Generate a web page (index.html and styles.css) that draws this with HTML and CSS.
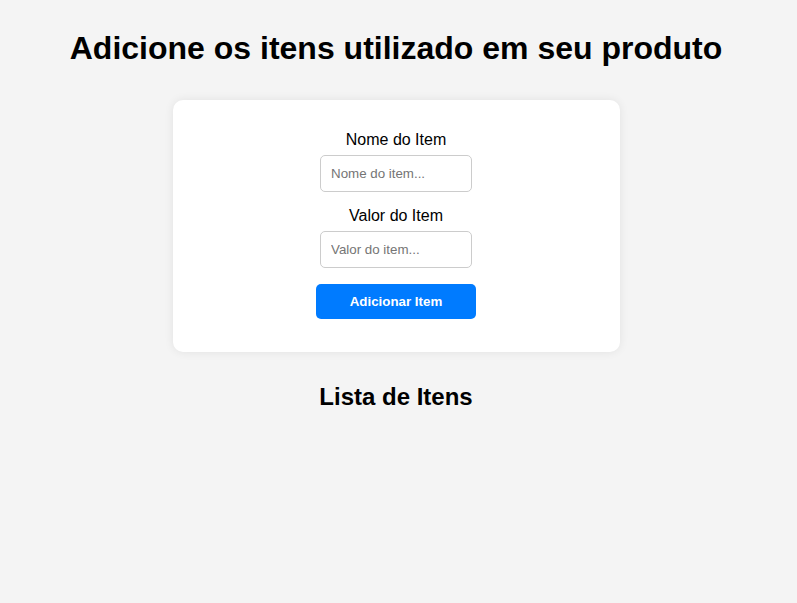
FILE: index.html
```html
<!DOCTYPE html>
<html lang="pt">
<head>
<meta charset="utf-8">
<title>Itens</title>
<link rel="stylesheet" href="styles.css">
</head>
<body>
<h1 class="title">Adicione os itens utilizado em seu produto</h1>
<div class="card">
  <label class="label" for="nome">Nome do Item</label>
  <input class="field" id="nome" type="text" placeholder="Nome do item...">
  <label class="label label-next" for="valor">Valor do Item</label>
  <input class="field" id="valor" type="text" placeholder="Valor do item...">
  <button class="btn" type="button">Adicionar Item</button>
</div>
<h2 class="subtitle">Lista de Itens</h2>
</body>
</html>
```
FILE: styles.css
```css
body {
  margin: 8px 13px 8px 8px;
  background: #f4f4f4;
  font-family: "Liberation Sans", Arial, sans-serif;
  color: #000;
}
.title {
  text-align: center;
  font-size: 32px;
  margin: 22px 0 0;
  line-height: 37px;
}
.card {
  width: 447px;
  box-sizing: border-box;
  margin: 33px auto 0;
  background: #fff;
  border-radius: 10px;
  box-shadow: 0 0 10px rgba(0, 0, 0, 0.08);
  padding: 31px 0 33px;
  display: flex;
  flex-direction: column;
  align-items: center;
}
.label {
  font-size: 16px;
  line-height: 18px;
  margin-bottom: 6px;
}
.label-next {
  margin-top: 15px;
}
.field {
  width: 152px;
  height: 37px;
  box-sizing: border-box;
  padding: 10px;
  border: 1px solid #ccc;
  border-radius: 5px;
  font-family: "Liberation Sans", Arial, sans-serif;
  font-size: 13.333px;
  background: #fff;
}
.field::placeholder {
  color: #757575;
}
.btn {
  margin-top: 16px;
  width: 160px;
  height: 35px;
  border: none;
  border-radius: 5px;
  background: #007bff;
  color: #fff;
  font-family: "Liberation Sans", Arial, sans-serif;
  font-size: 13.333px;
  font-weight: bold;
}
.subtitle {
  text-align: center;
  font-size: 24px;
  line-height: 28px;
  margin: 31px 0 0;
}
```
